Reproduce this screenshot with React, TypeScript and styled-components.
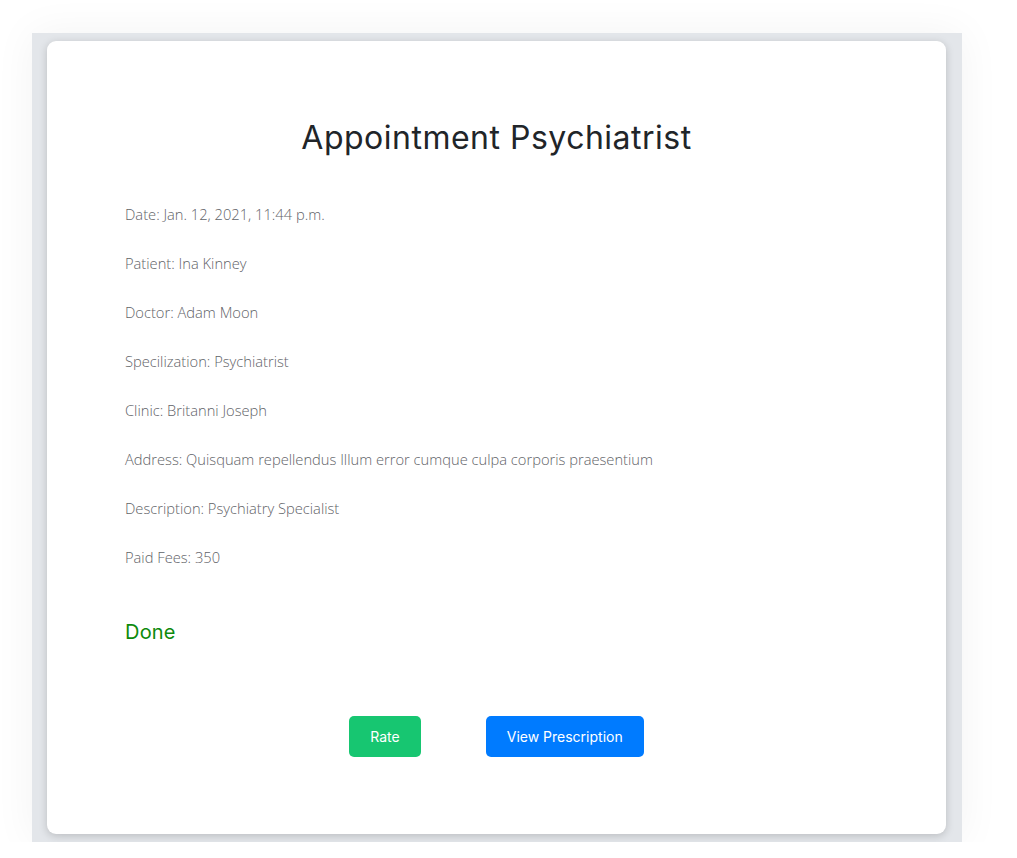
import React from "react";
import styled, { createGlobalStyle } from "styled-components";

const Global = createGlobalStyle`
  html, body { margin: 0; padding: 0; background: #ffffff; }
  body { font-family: "Open Sans", "Liberation Sans", sans-serif; }
`;

const Page = styled.div`
  padding: 33px 0 0 32px;
`;

const Frame = styled.div`
  width: 930px;
  height: 809px;
  box-sizing: border-box;
  padding: 8px 16px 8px 15px;
  background: #e3e6ea;
  box-shadow: 0 0 40px rgba(0, 0, 0, 0.05);
`;

const Card = styled.div`
  height: 793px;
  box-sizing: border-box;
  background: #ffffff;
  border-radius: 9px;
  box-shadow: 0 2px 8px rgba(0, 0, 0, 0.18);
  padding: 78px 78px 0 78px;
  display: flex;
  flex-direction: column;
`;

const Title = styled.h1`
  margin: 0 0 48px 0;
  text-align: center;
  font-family: "Inter", "Noto Sans", sans-serif;
  font-weight: 400;
  font-size: 32px;
  letter-spacing: 0.5px;
  line-height: 38px;
  color: #212529;
`;

const Info = styled.div`
  display: flex;
  flex-direction: column;
  gap: 30px;
`;

const Line = styled.p`
  margin: 0;
  font-family: "Open Sans", sans-serif;
  font-weight: 300;
  font-size: 14.7px;
  line-height: 19px;
  color: #5f6368;
`;

const Status = styled.div`
  margin-top: 52px;
  font-family: "Inter", sans-serif;
  font-size: 20px;
  letter-spacing: 0.2px;
  line-height: 26px;
  color: #0d8a0d;
`;

const Actions = styled.div`
  margin-top: 71px;
  display: flex;
  justify-content: center;
  gap: 65px;
`;

const Button = styled.button<{ $tone: "green" | "blue" }>`
  height: 41px;
  padding: 0 21px;
  border: none;
  border-radius: 5px;
  background: ${(p) => (p.$tone === "green" ? "#17c671" : "#007bff")};
  color: #ffffff;
  font-family: "Inter", sans-serif;
  font-size: 14px;
  cursor: pointer;
`;

const lines = [
  "Date: Jan. 12, 2021, 11:44 p.m.",
  "Patient: Ina Kinney",
  "Doctor: Adam Moon",
  "Specilization: Psychiatrist",
  "Clinic: Britanni Joseph",
  "Address: Quisquam repellendus Illum error cumque culpa corporis praesentium",
  "Description: Psychiatry Specialist",
  "Paid Fees: 350",
];

export default function App() {
  return (
    <>
      <Global />
      <Page>
        <Frame>
          <Card>
            <Title>Appointment Psychiatrist</Title>
            <Info>
              {lines.map((l) => (
                <Line key={l}>{l}</Line>
              ))}
            </Info>
            <Status>Done</Status>
            <Actions>
              <Button $tone="green">Rate</Button>
              <Button $tone="blue">View Prescription</Button>
            </Actions>
          </Card>
        </Frame>
      </Page>
    </>
  );
}
